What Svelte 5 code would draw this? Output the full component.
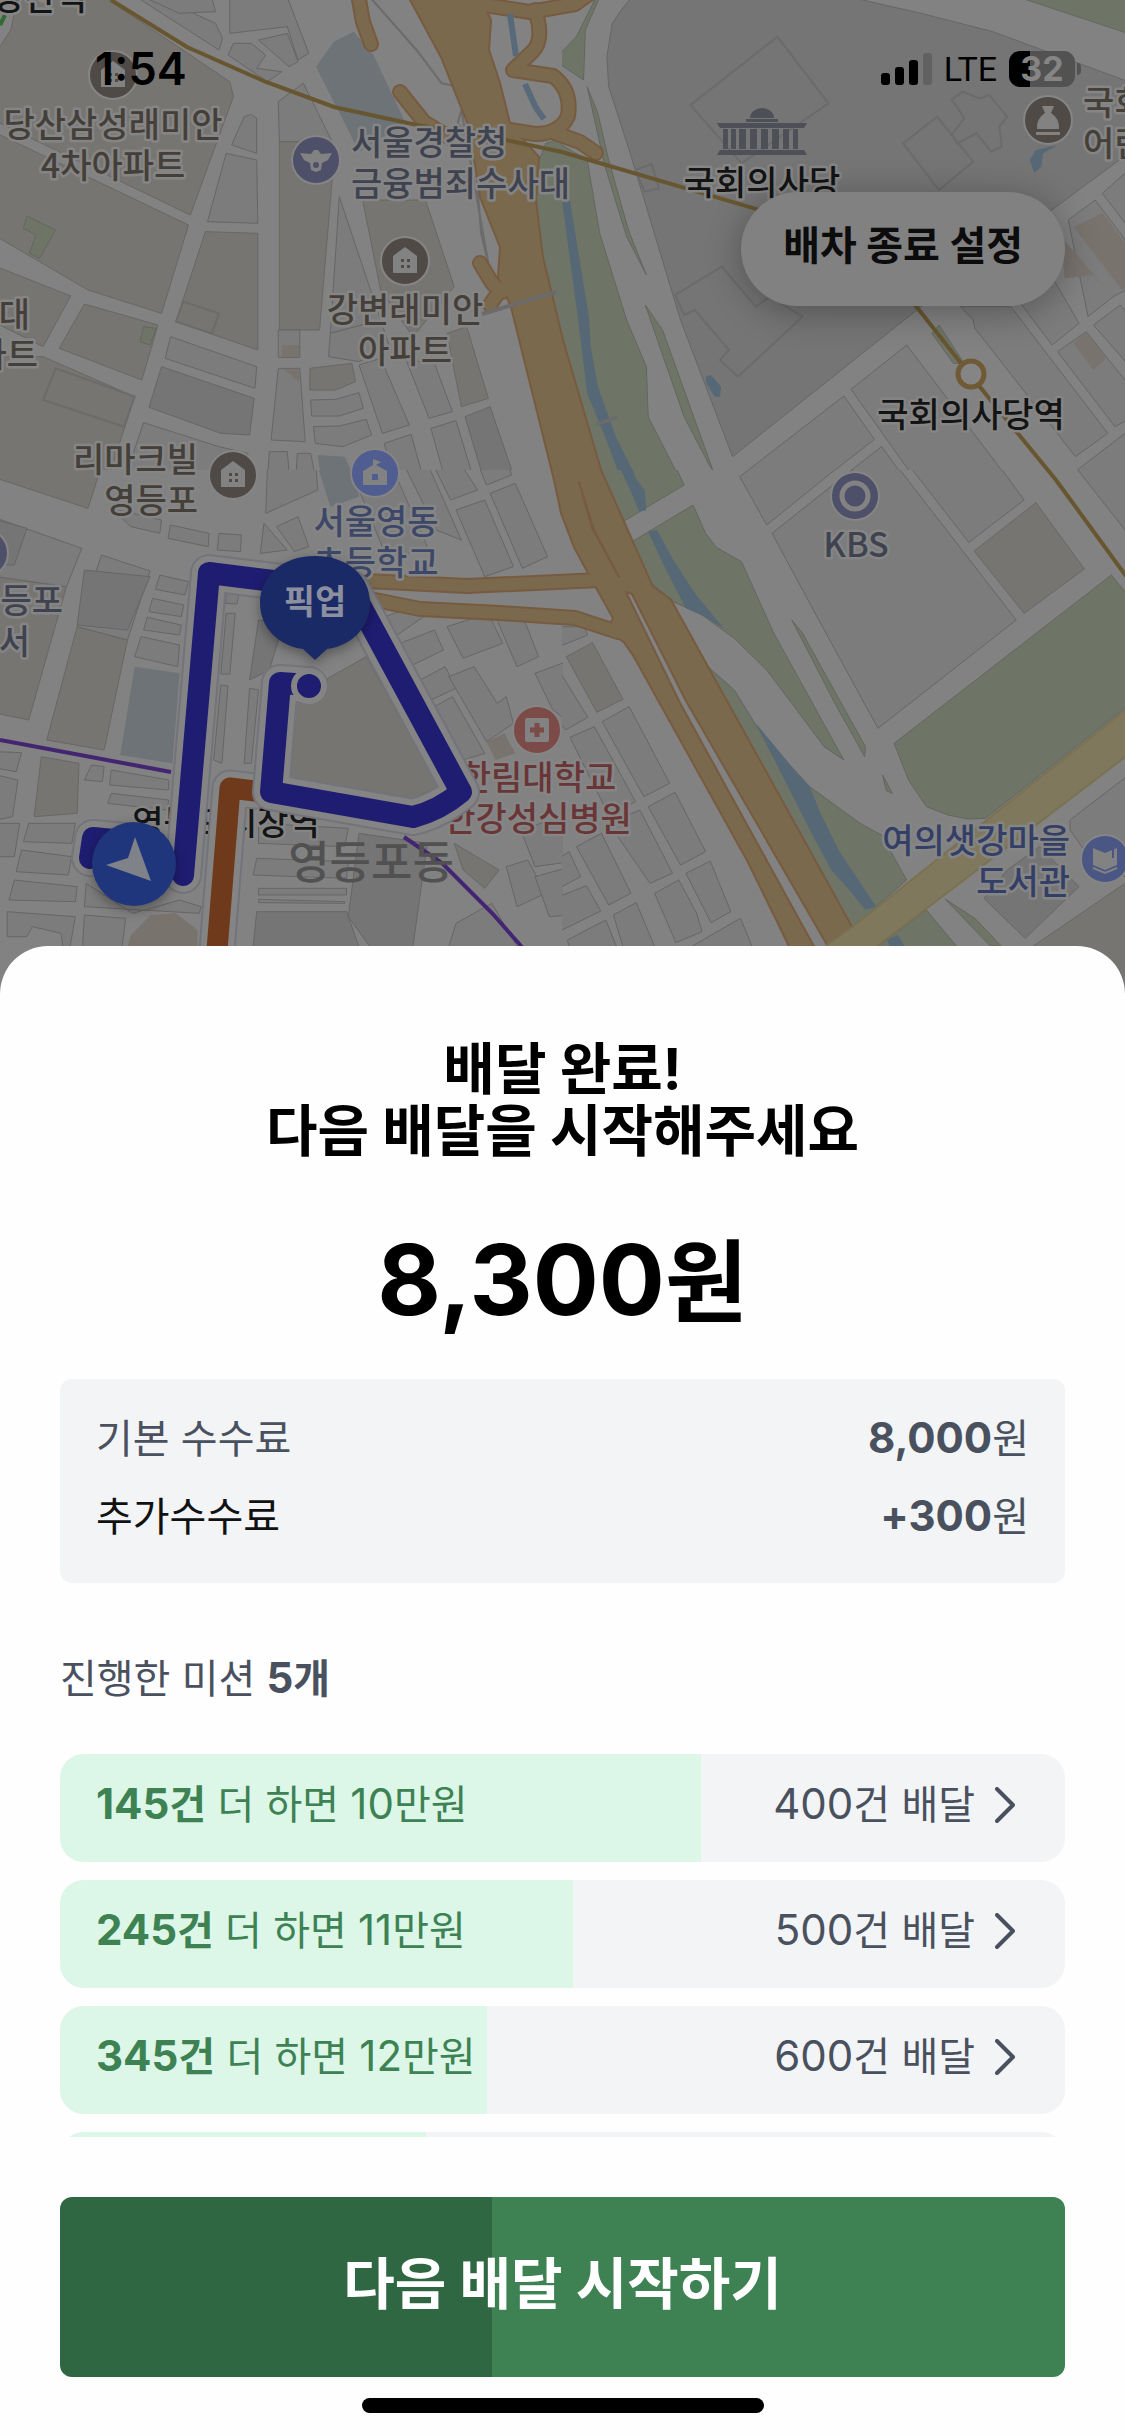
<script lang="ts">
	type Mission = { left: number; reward: string; goal: number };
	type Tile = { x: number; y: number; rows: number; shapes: [string, string[]][] };
	type Label = { x: number; y: number; lines: string[]; tone: string; anchor?: string };

	const done = 255;
	const missions: Mission[] = [
		{ left: 145, reward: '10만원', goal: 400 },
		{ left: 245, reward: '11만원', goal: 500 },
		{ left: 345, reward: '12만원', goal: 600 },
		{ left: 445, reward: '13만원', goal: 700 },
		{ left: 545, reward: '14만원', goal: 800 }
	];

	// survey tiles, each in its own grid, placed on the map by x / y
	const tiles: Tile[] = [
		{
			x: 0,
			y: 0,
			rows: 1410,
			shapes: [
				['estate', [
					'-9,155 30,90 50,-9 290,-9 640,245 650,290 530,645 -9,365',
					'-9,400 525,675 450,940 245,870 -9,710',
					'572,695 718,700 718,1050 490,965',
					'778,425 925,425 925,540 890,990 778,990',
					'1010,600 1185,600 1265,860 1150,1010 1060,870',
					'-9,800 197,888 120,1040 -9,970',
					'235,912 440,975 395,1140 165,1045',
					'-9,1070 120,1070 375,1190 300,1440 -9,1440',
					'863,1105 980,1090 990,1145 935,1170 863,1170',
					'1245,1000 1300,980 1360,1195 1285,1220'
				]],
				['lot', [
					'330,-9 380,-9 610,150 620,115 600,70 440,-9',
					'400,-9 590,-9 600,35 500,40',
					'640,-9 800,-9 860,160 830,180 800,80 640,100',
					'720,120 800,100 830,185 805,200',
					'635,165 650,130 700,130 740,165 715,205 785,215 745,245',
					'630,460 715,480 718,670 578,665',
					'680,350 700,343 715,355 715,460 645,435',
					'775,305 845,250 925,425 778,425',
					'945,590 1060,960 920,1000',
					'475,1010 715,1100 710,1165 460,1075',
					'400,1268 610,1340 690,1360 690,1440 345,1440',
					'775,1105 835,1105 850,1325 755,1320',
					'775,990 835,990 835,1072 775,1072',
					'865,1200 935,1198 1000,1178 1012,1225 945,1248 868,1248',
					'873,1280 945,1278 1020,1258 1035,1305 955,1340 878,1330',
					'1000,1095 1060,1075 1140,1275 1065,1300',
					'1120,1050 1165,1085 1210,1090 1260,1235 1195,1255',
					'1200,1285 1270,1262 1320,1440 1240,1440',
					'1070,1330 1145,1303 1180,1440 1100,1440',
					'750,1355 800,1355 805,1415 825,1415 828,1360 865,1360 880,1440 745,1440',
					'920,1000 1060,960 1085,1040 1000,1085 915,1070'
				]],
				['dark', ['450,1100 708,1195 695,1305 615,1300 415,1222', '1295,1250 1365,1220 1430,1425 1340,1412']],
				['school', ['930,125 985,95 1040,165 1130,370 1000,455 960,370 880,200', '885,1365 960,1370 990,1440 895,1440']],
				['shop', ['785,1035 833,1035 833,1070 785,1070', '790,1108 833,1108 833,1145']],
				['green', [
					'75,648 155,690 110,775 82,760 100,705 65,685',
					'400,980 435,985 418,1035 390,1025',
					'1600,400 1520,430 1495,500 1490,700 1515,860 1600,1150'
				]],
				['line', [
					'1030,-9 1160,150 1230,250 1300,265 1140,-9',
					'120,1200 155,1105 375,1190 345,1280',
					'510,905 610,940 590,1000 490,965',
					'1285,330 1275,370 1320,430 1340,700 1360,790'
				]]
			]
		},
		{
			x: 562,
			y: 0,
			rows: 1410,
			shapes: [
				['dark', ['195,-9 800,-9 1000,40 1200,95 1590,250 1590,450 1000,920 475,1370 330,960 190,460 130,260 125,170 140,70 165,30']],
				['green', [
					'1270,-9 1590,-9 1590,105',
					'-9,430 70,480 105,700 180,960 235,1100 240,1250 330,1440 110,1440 -9,1020',
					'95,-9 40,110 -9,165 -9,190 60,240 65,90 105,-9',
					'70,260 100,340 130,480 185,690 235,825 180,710 120,500',
					'232,915 280,990 420,1410 415,1405 340,1250',
					'1030,1000 1050,975 1120,1090 1090,1090'
				]],
				['lot', [
					'805,1168 960,1035 1245,1440 985,1440',
					'495,1430 785,1188 870,1318 725,1440 500,1440',
					'890,1340 765,1445 962,1445',
					'1270,900 1370,840 1440,970 1365,1035',
					'1110,920 1145,960 1150,985 1430,1370 1520,1300 1250,920',
					'1410,660 1485,600 1590,750 1590,860 1535,890 1465,950',
					'1380,1055 1460,995 1590,1170 1590,1250 1540,1280',
					'1480,975 1555,915 1590,960 1590,1110',
					'1505,580 1568,520 1590,510 1590,700',
					'1435,1410 1568,1300 1590,1290 1590,1440 1450,1440'
				]],
				['shop', ['1425,680 1505,640 1590,760 1590,850 1560,870', '1390,710 1535,890 1480,825 1400,835', '1425,1030 1460,995 1515,1075 1480,1110']],
				['water', [
					'0,600 22,600 40,720 75,950 80,1040 100,1160 150,1310 210,1440 165,1440 120,1310 70,1180 45,960 25,800',
					'400,1130 415,1125 443,1160 440,1190 425,1190 402,1150',
					'1303,480 1320,450 1380,436 1340,460 1335,500 1315,518'
				]],
				['line', [
					'600,110 742,310 500,490 358,315',
					'1045,350 1145,485 1050,570 950,430',
					'1115,275 1165,295 1190,285 1240,350 1218,380 1225,440 1195,455 1155,400 1100,430 1085,405 1120,355 1100,320 1085,300',
					'315,885 445,800 540,920 580,890 670,950 490,1130 440,1080 465,1050 370,930 340,945',
					'205,510 250,492 270,565 230,575'
				]]
			]
		},
		{
			x: 0,
			y: 470,
			rows: 1572,
			shapes: [
				['estate', [
					'-9,-9 262,-9 285,-20 245,115 -9,25',
					'-9,320 185,350 80,750 -9,730',
					'215,470 355,510 290,840 130,810',
					'115,860 220,880 215,1030 95,1040',
					'1265,1120 1390,1200 1350,1255 1290,1200',
					'790,700 1020,560 1220,950 1150,985 790,920'
				]],
				['lot', [
					'-9,145 228,235 185,350 -9,320',
					'283,255 418,303 355,510 215,470',
					'445,315 525,335 515,375 433,358',
					'425,385 512,405 505,440 415,425',
					'410,442 505,465 500,495 400,480',
					'393,500 500,525 495,590 375,560',
					'310,115 450,150 445,190 365,170',
					'475,165 582,190 580,230 468,205',
					'610,190 672,195 670,245 605,240',
					'735,160 800,240 725,250',
					'745,-9 880,-9 885,60 740,130',
					'770,170 830,140 860,230 820,245',
					'630,370 665,372 660,402 628,400',
					'630,430 655,430 640,612 615,612',
					'615,645 635,648 618,880 595,870',
					'695,655 720,660 700,880 680,880',
					'-9,845 60,848 45,905 -9,895',
					'255,885 290,890 285,935 235,930',
					'310,900 470,930 470,960 305,945',
					'-9,915 50,930 35,1040 -9,1050',
					'310,970 470,990 465,1020 300,1000',
					'80,1060 210,1060 200,1120 65,1115',
					'-9,1060 55,1060 40,1160 -9,1160',
					'60,1140 200,1160 190,1215 45,1205',
					'40,1230 215,1250 210,1295 25,1290',
					'240,1240 370,1330 500,1290 560,1310 555,1330 235,1310',
					'20,1325 210,1340 195,1430 175,1430 170,1390 90,1370 75,1400 20,1400',
					'235,1335 350,1345 340,1430 230,1430',
					'720,1060 970,1075 960,1130 720,1120',
					'715,1165 970,1175 965,1225 705,1215',
					'720,1255 965,1255 965,1275 720,1275',
					'720,1288 960,1295 960,1300 720,1298',
					'1130,-5 1190,-20 1285,210 1215,180',
					'1200,-30 1270,-40 1330,60 1255,90',
					'1270,120 1350,90 1430,290 1350,320',
					'1365,70 1435,40 1525,260 1455,295',
					'1355,45 1330,-20 1410,-30 1425,15',
					'1000,60 1100,10 1190,230 1080,270',
					'1075,440 1145,410 1180,440 1100,500',
					'1115,520 1210,480 1235,540 1140,590',
					'1245,470 1360,430 1400,520 1290,565',
					'1170,630 1240,590 1270,655 1200,690',
					'1250,620 1320,590 1385,700 1410,680 1430,760 1355,815',
					'1210,710 1260,680 1350,850 1290,870',
					'1380,440 1460,450 1500,560 1440,590',
					'1490,610 1590,570 1590,760 1540,720',
					'1450,1080 1590,1030 1590,1175 1490,1190',
					'1410,1190 1470,1170 1520,1270 1440,1310',
					'1490,1220 1590,1190 1590,1335 1530,1340',
					'1250,1430 1270,1360 1370,1300 1440,1430'
				]],
				['dark', [
					'-9,150 75,175 40,285 -9,285',
					'1000,1090 1190,1120 1150,1430 1030,1430 970,1340',
					'715,1325 965,1325 1000,1430 705,1430',
					'720,450 790,460 750,600 695,630',
					'235,300 418,320 355,480 215,465'
				]],
				['school', ['375,590 500,610 480,880 335,855', '885,-10 985,-10 1000,80 920,110']],
				['shop', ['355,1430 365,1395 420,1335 490,1330 550,1380 550,1430', '1355,815 1405,790 1435,850 1380,870']]
			]
		},
		{
			x: 562,
			y: 470,
			rows: 1572,
			shapes: [
				['green', [
					'101,-9 317,-9 340,45 170,155',
					'195,215 365,105 400,190 430,232 500,275 590,490 785,870 730,830 640,700 570,600 480,505 390,435 310,395 250,340',
					'380,565 480,660 560,800 690,950 830,1060 890,1095 960,1230 805,1375 660,1090',
					'880,1430 1015,1320 1100,1430',
					'640,450 670,490 845,830 843,860 760,700',
					'925,820 1530,315 1568,365 1590,365 1590,695 1180,1045 1130,1047 1075,1035 1015,1010 965,930',
					'893,915 920,970 903,962',
					'1067,1287 1150,1345 1225,1430 1190,1425'
				]],
				['lot', [
					'585,190 760,40 820,-9 935,-9 1265,450 880,775 700,420',
					'495,20 530,-9 770,-9 570,165',
					'970,-9 1220,-9 1287,90 1133,217',
					'1430,-9 1590,-9 1590,210',
					'1415,1050 1590,905 1590,1230 1480,1180 1415,1080',
					'-9,470 60,470 72,495 -9,530',
					'-9,600 72,742 10,780 -20,740',
					'112,755 187,710 300,940 228,980',
					'22,802 90,770 205,995 130,1035',
					'240,1010 315,967 400,1145 330,1185',
					'130,1060 217,1020 308,1210 245,1240',
					'345,1210 413,1173 470,1325 415,1358',
					'258,1270 325,1230 375,1330 390,1385 317,1418',
					'40,1130 110,1090 192,1270 130,1305',
					'-9,1165 20,1145 52,1220 -9,1255',
					'-9,1280 68,1247 108,1323 -9,1385',
					'143,1335 207,1298 258,1430 170,1430',
					'15,1410 122,1350 152,1430 20,1430',
					'360,1430 497,1345 530,1430'
				]],
				['estate', ['1148,243 1320,98 1455,297 1287,430', '12,560 85,518 170,688 97,727', '1310,1430 1568,1240 1590,1230 1590,1600 1310,1600']],
				['dark', ['1175,1285 1240,1200 1330,1130 1440,1250 1290,1405']],
				['water', [
					'160,-9 196,-9 205,25 230,60 235,120 215,125 190,60',
					'240,185 265,180 310,270 370,370 450,475 390,435 345,415 290,300',
					'540,760 640,890 690,950 720,1030 770,1140 875,1310 845,1320 800,1260 750,1200 690,1080 620,930',
					'905,1410 935,1395 955,1430 915,1430'
				]]
			]
		}
	];

	const labels: Label[] = [
		{ x: 87, y: 10, lines: ['당산역'], tone: 'ink', anchor: 'end' },
		{ x: 113, y: 137, lines: ['당산삼성래미안', '4차아파트'], tone: 'brown' },
		{ x: 351, y: 155, lines: ['서울경찰청', '금융범죄수사대'], tone: 'slate', anchor: 'start' },
		{ x: 405, y: 322, lines: ['강변래미안', '아파트'], tone: 'brown' },
		{ x: 30, y: 327, lines: ['대'], tone: 'brown', anchor: 'end' },
		{ x: 38, y: 367, lines: ['파트'], tone: 'brown', anchor: 'end' },
		{ x: 198, y: 472, lines: ['리마크빌', '영등포'], tone: 'brown', anchor: 'end' },
		{ x: 376, y: 534, lines: ['서울영동', '초등학교'], tone: 'blue' },
		{ x: 63, y: 613, lines: ['등포'], tone: 'slate', anchor: 'end' },
		{ x: 30, y: 654, lines: ['서'], tone: 'slate', anchor: 'end' },
		{ x: 538, y: 790, lines: ['한림대학교', '한강성심병원'], tone: 'red' },
		{ x: 762, y: 195, lines: ['국회의사당'], tone: 'ink' },
		{ x: 971, y: 427, lines: ['국회의사당역'], tone: 'ink' },
		{ x: 856, y: 557, lines: ['KBS'], tone: 'slate' },
		{ x: 1083, y: 115, lines: ['국회', '어린이'], tone: 'brown', anchor: 'start' },
		{ x: 1070, y: 853, lines: ['여의샛강마을', '도서관'], tone: 'navy', anchor: 'end' },
		{ x: 226, y: 835, lines: ['영등포시장역'], tone: 'ink' }
	];

	const homes = [
		[113, 75],
		[405, 261],
		[233, 475]
	];

	const expressway =
		'M409 -4L442 57L470 127L481 197L501 247L499 277L512 307L555 480L562 513L575 547L589 573L614 618L609 630L625 642L634 655L749 862L792 950L862 950L851 927L670 600L652 587L600 470L562 340L542 257L535 200L538 157L510 127L499 83L488 50L490 20L478 -4Z';
	const ramps = [
		'M358 -6L363 22L371 44',
		'M400 92L424 122L470 150',
		'M480 263L492 283L502 292',
		'M490 305L500 290',
		'M478 4L530 12L575 4L592 -8',
		'M535 10Q545 40 532 52L513 70L553 76Q572 90 568 116Q560 134 535 134L510 130',
		'M555 133L580 142L596 153',
		'M366 581L467 586L600 580',
		'M370 599L420 609L500 613L575 618L618 632'
	];
	const route = 'M183 875L209 573L330 588L352 590L461 792Q440 810 413 817L271 792L280 683L309 685';

	function runs(text: string) {
		return text.split(/([\d,+]+)/).filter(Boolean);
	}
</script>

{#snippet mixed(text: string)}{#each runs(text) as run}{#if /\d/.test(run)}<span class="num">{run}</span>{:else}{run}{/if}{/each}{/snippet}

<div class="screen">
	<section class="map-area" aria-label="지도">
		<svg class="map" viewBox="0 0 1125 994" aria-hidden="true">
			<rect width="1125" height="994" fill="#828282" />

			{#each tiles as tile}
				<svg x={tile.x} y={tile.y} width="563" height={tile.rows / 3} viewBox="0 0 1568 {tile.rows}" preserveAspectRatio="none">
					{#each tile.shapes as [kind, shapes]}
						{#each shapes as points}
							<polygon class={kind} {points} />
						{/each}
					{/each}
				</svg>
			{/each}

			<!-- expressway and its ramps -->
			<g fill="none" stroke-linejoin="round" stroke-linecap="round">
				<path d={expressway} stroke="#775b40" stroke-width="4" />
				{#each ramps as d}
					<path {d} stroke="#775b40" stroke-width="16" />
				{/each}
				<path d={expressway} fill="#7b694d" />
				{#each ramps as d}
					<path {d} stroke="#7b694d" stroke-width="12" />
				{/each}
				<path d="M579 482L592 528L619 577L594 530ZM626 592L680 703L816 950L830 950L686 701L632 594Z" fill="#828282" stroke="#775b40" stroke-width="2" />
				<path d="M510 14L516 56M525 84L536 108L544 119" stroke="#586a79" stroke-width="6" stroke-linecap="butt" />
				<path d="M482 314L556 292M596 425L617 417" stroke="#6b6b6b" stroke-width="4" stroke-linecap="butt" />
			</g>
			<polygon points="1129,707 851,928 820,950 872,950 1129,754" fill="#7f785c" stroke="#7a7150" stroke-width="2" />

			<g fill="none" stroke-width="4">
				<path d="M111 0L187 47L266 82L334 107L417 125L506 140L562 152L770 213L850 240L916 306L971 376L1056 480L1129 580" stroke="#675630" />
				<path d="M0 740L171 772M404 837L442 863L492 913L528 954" stroke="#432572" />
				<path d="M0 25L5 15" stroke="#2f6b32" />
			</g>
			<circle cx="971" cy="374" r="13" fill="#858585" stroke="#6f5a35" stroke-width="5" />

			<text class="district" x="371" y="879">영등포동</text>
			{#each labels as label}
				<text class="label {label.tone}" text-anchor={label.anchor ?? 'middle'} y={label.y}>
					{#each label.lines as line, i}
						<tspan x={label.x} dy={i ? 41 : 0}>{line}</tspan>
					{/each}
				</text>
			{/each}

			{#each homes as [x, y]}
				<g transform="translate({x} {y})">
					<circle class="poi" r="24" fill="#4f4a46" />
					<path d="M-12 12V-5L0 -14L12 -5V12Z" fill="#828282" />
					<path d="M-4 -2h3v3h-3zM2 -2h3v3h-3zM-4 4h3v3h-3zM2 4h3v3h-3z" fill="#4f4a46" />
				</g>
			{/each}
			<g transform="translate(316 160)">
				<circle class="poi" r="24" fill="#4d5068" />
				<path d="M-16 -7L-5 -6L-2 -10H2L5 -6L16 -7L12 0L6 3L5 10L0 12L-5 10L-6 3L-12 0Z" fill="#828282" />
				<circle cy="5" r="3" fill="#4d5068" />
			</g>
			<g transform="translate(375 473)">
				<circle class="poi" r="24" fill="#4f5d90" />
				<path d="M-12 12V-2L-2 -8V-14L6 -11L1 -8L12 -2V12Z" fill="#828282" />
				<rect x="-3" y="1" width="6" height="6" fill="#4f5d90" />
			</g>
			<circle class="poi" cx="-16" cy="553" r="24" fill="#4d5068" />
			<g transform="translate(855 496)">
				<circle class="poi" r="24" fill="#4d5068" />
				<circle r="13" fill="none" stroke="#828282" stroke-width="5" />
			</g>
			<g transform="translate(537 730)">
				<circle class="poi" r="24" fill="#7c4a47" />
				<rect x="-12" y="-12" width="24" height="24" rx="2" fill="#828282" />
				<path d="M-7 0H7M0 -7V7" stroke="#7c4a47" stroke-width="5" />
			</g>
			<g transform="translate(1105 859)">
				<circle class="poi" r="24" fill="#4a5684" />
				<path d="M-12 -11L0 -6L12 -11V6L0 11L-12 6Z" fill="#828282" />
				<path d="M-12 9L0 14L12 9M8 -9V0" fill="none" stroke="#828282" stroke-width="2" />
				<path d="M8 -10V-1" stroke="#4a5684" stroke-width="2" />
			</g>
			<g transform="translate(1048 120)">
				<circle class="poi" r="24" fill="#4f4a46" />
				<path d="M-6 -14H6L3 -7Q12 -1 11 9H-11Q-12 -1 -3 -7ZM-12 12H12V15H-12Z" fill="#828282" />
			</g>
			<g transform="translate(762 132)" fill="#4d5056">
				<path d="M-12 -14A12 10 0 0 1 12 -14ZM-16 -13H16V-10H-16ZM-45 -9H45L42 -4H-42ZM-42 18H42L45 23H-45Z" />
				<path d="M-39 -3h5v20h-5zM-31 -3h5v20h-5zM-23 -3h7v20h-7zM-12 -3h7v20h-7zM-1 -3h7v20h-7zM10 -3h7v20h-7zM21 -3h6v20h-6zM31 -3h5v20h-5z" />
			</g>

			<!-- routes -->
			<g fill="none" stroke-linejoin="round" stroke-linecap="round">
				<path d="M255 791L230 788L213 1000" stroke="#72747a" stroke-width="37" />
				<path d="M255 791L230 788L213 1000" stroke="#848484" stroke-width="33" />
				<path d="M255 791L230 788L213 1000" stroke="#6f391b" stroke-width="21" />
				<path d="M90 858L93 838L134 842{route}" stroke="#72747a" stroke-width="38" />
				<path d="M90 858L93 838L134 842{route}" stroke="#848484" stroke-width="34" />
				<path d="M90 858L93 838L134 842{route}" stroke="#1f1d72" stroke-width="22" />
			</g>
			<circle cx="309" cy="686" r="15" fill="#1f1d72" stroke="#848484" stroke-width="6" />

			<g class="lifted">
				<path d="M315 556C349 556 370 577 370 603C370 628 351 646 327 649L315 660L303 649C279 646 260 628 260 603C260 577 281 556 315 556Z" fill="#1a2a66" />
				<circle cx="134" cy="864" r="42" fill="#20367c" />
			</g>
			<text class="pickup" x="315" y="614">픽업</text>
			<path d="M135 837L151 881L106 865L128 858Z" fill="#7f8289" />
		</svg>

		<header class="status">
			<time>1:54</time>
			<div class="signals">
				<svg width="51" height="32" viewBox="0 0 51 32" role="img" aria-label="신호">
					<rect y="20" width="9" height="12" rx="3" />
					<rect x="14" y="14" width="9" height="18" rx="3" />
					<rect x="28" y="7" width="9" height="25" rx="3" />
					<rect x="42" width="9" height="32" rx="3" fill="#616161" />
				</svg>
				<span class="carrier">LTE</span>
				<span class="battery">32</span>
			</div>
		</header>

		<button class="end-shift" type="button">배차 종료 설정</button>
	</section>

	<main class="sheet">
		<h1>배달 완료!<br />다음 배달을 시작해주세요</h1>
		<p class="total">{@render mixed('8,300원')}</p>

		<dl class="fees">
			<div class="fee">
				<dt>기본 수수료</dt>
				<dd><strong class="num">8,000</strong>원</dd>
			</div>
			<div class="fee">
				<dt class="extra">추가수수료</dt>
				<dd><strong class="num">+300</strong>원</dd>
			</div>
		</dl>

		<h2>진행한 미션 <strong>{@render mixed(`${missions.length}개`)}</strong></h2>
		<ul class="missions">
			{#each missions as mission}
				<li>
					<button class="mission" type="button">
						<span class="progress" style="width: {(done / mission.goal) * 100}%"></span>
						<span class="left"><strong>{@render mixed(`${mission.left}건`)}</strong> 더 하면 {@render mixed(mission.reward)}</span>
						<span class="goal">{@render mixed(`${mission.goal}건 배달`)}</span>
						<svg class="chevron" width="20" height="36" viewBox="0 0 20 36" aria-hidden="true">
							<path d="M2 2L18 18L2 34" />
						</svg>
					</button>
				</li>
			{/each}
		</ul>

		<button class="next" type="button">다음 배달 시작하기</button>
		<div class="home-bar"></div>
	</main>
</div>

<style>
	:global(body) {
		margin: 0;
		background: #fefefe;
	}

	.screen {
		font-family: Inter, 'Noto Sans CJK KR', sans-serif;
		font-size: 40px;
		line-height: 48px;
		color: #4a515e;
	}

	button {
		border: none;
		font-family: inherit;
		cursor: pointer;
	}

	.num {
		font-size: 42px;
		line-height: 1;
	}

	.map-area {
		position: relative;
	}

	.map {
		display: block;
		width: 100%;
		font-family: 'Noto Sans CJK KR', sans-serif;
	}

	.map polygon {
		vector-effect: non-scaling-stroke;
	}

	.lot {
		fill: #7c7c7c;
		stroke: #666;
		stroke-width: 1;
	}

	.estate {
		fill: #777571;
		stroke: #696765;
		stroke-width: 1;
	}

	.dark {
		fill: #757575;
		stroke: #666;
		stroke-width: 1;
	}

	.school {
		fill: #6d7377;
	}

	.shop {
		fill: #79736e;
	}

	.green {
		fill: #6e7566;
		stroke: #636660;
		stroke-width: 1;
	}

	.water {
		fill: #566776;
	}

	.line {
		fill: none;
		stroke: #6b6b6b;
		stroke-width: 2;
	}

	.label {
		font-size: 34px;
		font-weight: 500;
		stroke: #858585;
		stroke-width: 5;
		stroke-linejoin: round;
		paint-order: stroke;
	}

	.ink {
		fill: #141414;
	}

	.brown {
		fill: #453f39;
	}

	.slate {
		fill: #3f434f;
	}

	.blue {
		fill: #3d4869;
	}

	.navy {
		fill: #333f66;
	}

	.red {
		fill: #693536;
	}

	.district {
		font-size: 45px;
		font-weight: 500;
		fill: #515151;
		text-anchor: middle;
	}

	.poi {
		stroke: #858585;
		stroke-width: 2;
	}

	.lifted {
		filter: drop-shadow(0 4px 6px rgba(0, 0, 0, 0.35));
	}

	.pickup {
		font-size: 34px;
		font-weight: 700;
		fill: #8b8f9e;
		text-anchor: middle;
	}

	.status {
		position: absolute;
		top: 0;
		left: 0;
		right: 0;
		display: flex;
		justify-content: space-between;
		align-items: center;
		padding: 45px 50px 0 95px;
		color: #000;
	}

	.status time {
		font-size: 45px;
		font-weight: 600;
	}

	.signals {
		display: flex;
		align-items: center;
		gap: 12px;
	}

	.carrier {
		font-size: 34px;
		font-weight: 400;
		font-family: Roboto, sans-serif;
	}

	.battery {
		position: relative;
		width: 66px;
		border-radius: 11px;
		background: linear-gradient(90deg, #000 32%, #525252 32%);
		color: #858585;
		font-size: 34px;
		font-weight: 700;
		line-height: 36px;
		text-align: center;
	}

	.battery::after {
		content: '';
		position: absolute;
		top: 12px;
		right: -6px;
		width: 4px;
		height: 12px;
		border-radius: 0 4px 4px 0;
		background: #525252;
	}

	.end-shift {
		position: absolute;
		top: 192px;
		right: 60px;
		padding: 30px 42px 36px;
		border-radius: 57px;
		background: #818181;
		box-shadow: 0 6px 36px rgba(0, 0, 0, 0.3);
		color: #0c0c0c;
		font-size: 40px;
		font-weight: 700;
		line-height: 48px;
	}

	.sheet {
		position: relative;
		margin-top: -48px;
		padding: 92px 60px 24px;
		border-radius: 48px 48px 0 0;
		background: #fefefe;
	}

	h1,
	.total {
		margin: 0;
		color: #000;
		font-weight: 700;
		text-align: center;
	}

	h1 {
		font-size: 56px;
		line-height: 62px;
	}

	.total {
		margin-top: 69px;
		font-size: 90px;
		line-height: 100px;
	}

	.total .num {
		font-size: 98px;
	}

	.fees {
		display: flex;
		flex-direction: column;
		gap: 30px;
		margin: 46px 0 0;
		padding: 36px 36px 42px;
		border-radius: 12px;
		background: #f3f4f6;
	}

	.fee {
		display: flex;
		justify-content: space-between;
	}

	.fee dd {
		margin: 0;
	}

	.extra {
		color: #111;
	}

	h2 {
		margin: 72px 0 0;
		font-size: 40px;
		font-weight: 400;
	}

	.missions {
		display: flex;
		flex-direction: column;
		gap: 18px;
		max-height: 383px;
		margin: 51px 0 0;
		padding: 0;
		overflow-y: auto;
		scrollbar-width: none;
		list-style: none;
	}

	.mission {
		position: relative;
		display: flex;
		align-items: center;
		gap: 20px;
		width: 100%;
		padding: 27px 50px 33px 36px;
		overflow: hidden;
		border-radius: 24px;
		background: #f3f4f6;
		color: #4a515e;
		font-size: 40px;
		line-height: 48px;
	}

	.progress {
		position: absolute;
		top: 0;
		bottom: 0;
		left: 0;
		background: #dcf7e7;
	}

	.left {
		position: relative;
		flex: 1;
		color: #3e8254;
		text-align: left;
	}

	.goal {
		position: relative;
	}

	.chevron {
		fill: none;
		stroke: #4a515e;
		stroke-width: 4;
		stroke-linecap: round;
		stroke-linejoin: round;
	}

	.next {
		display: block;
		width: 100%;
		margin-top: 60px;
		padding: 56px 24px 62px;
		border-radius: 12px;
		background: linear-gradient(90deg, #2e6742 43%, #3e8254 43%);
		color: #fff;
		font-size: 56px;
		font-weight: 700;
		line-height: 62px;
	}

	.home-bar {
		width: 36%;
		min-width: 402px;
		height: 15px;
		margin: 21px auto 0;
		border-radius: 8px;
		background: #000;
	}
</style>
